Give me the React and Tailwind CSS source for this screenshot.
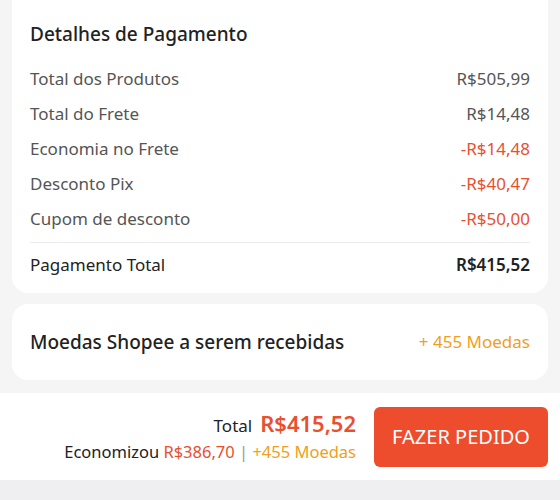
export default function App() {
  const rows = [
    { label: 'Total dos Produtos', value: 'R$505,99' },
    { label: 'Total do Frete', value: 'R$14,48' },
    { label: 'Economia no Frete', value: '-R$14,48', red: true },
    { label: 'Desconto Pix', value: '-R$40,47', red: true },
    { label: 'Cupom de desconto', value: '-R$50,00', red: true },
  ];

  return (
    <div className="w-[560px] h-[500px] bg-[#f5f5f5] flex flex-col overflow-hidden" style={{ fontFamily: '"Noto Sans", sans-serif' }}>
      <div className="mx-3 bg-white rounded-b-2xl px-[18px] pt-[20px] pb-[15px]">
        <h2 className="text-[19px] leading-[28px] text-[#222] font-medium">Detalhes de Pagamento</h2>
        <div className="mt-[13px]">
          {rows.map((r) => (
            <div key={r.label} className="flex justify-between items-center h-[35px] text-[17px]">
              <span className="text-[#555]">{r.label}</span>
              <span className={r.red ? 'text-[#e8502f]' : 'text-[#555]'}>{r.value}</span>
            </div>
          ))}
        </div>
        <div className="mt-[6px] border-t border-[#ececec]" />
        <div className="flex justify-between items-center pt-[9px] h-[35px] text-[17px] text-[#222]">
          <span>Pagamento Total</span>
          <span className="font-semibold">R$415,52</span>
        </div>
      </div>

      <div className="mx-3 mt-[11px] bg-white rounded-2xl h-[76px] px-[18px] flex items-center justify-between">
        <span className="text-[19px] text-[#222] font-medium">Moedas Shopee a serem recebidas</span>
        <span className="text-[17px] text-[#f0a020]">+ 455 Moedas</span>
      </div>

      <div className="mt-[13px] bg-white h-[87px] flex items-center justify-end pr-3">
        <div className="flex flex-col items-end mr-[18px]">
          <div className="flex items-baseline gap-[8px]">
            <span className="text-[17px] text-[#222]">Total</span>
            <span className="text-[22px] font-semibold text-[#e8502f] leading-[30px]">R$415,52</span>
          </div>
          <div className="text-[16.5px] leading-[26px] text-[#222]">
            Economizou <span className="text-[#e8502f]">R$386,70</span>{' '}
            <span className="text-[#999]">|</span>{' '}
            <span className="text-[#f0a020]">+455 Moedas</span>
          </div>
        </div>
        <button className="w-[174px] h-[60px] rounded-md bg-[#ee4d2d] text-white text-[20px]">FAZER PEDIDO</button>
      </div>
      <div className="flex-1 bg-[#efeff1]" />
    </div>
  );
}
